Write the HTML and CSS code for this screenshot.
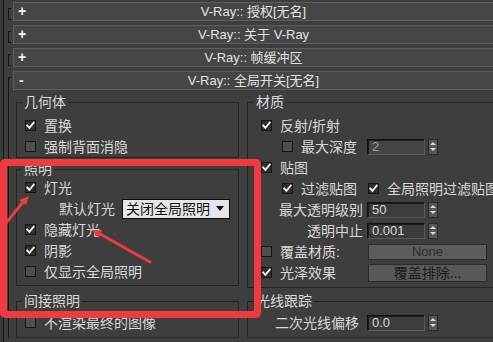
FILE: index.html
```html
<!DOCTYPE html>
<html lang="zh-CN">
<head>
<meta charset="utf-8">
<title>V-Ray 全局开关</title>
<link rel="stylesheet" href="styles.css">
</head>
<body>
<div class="app">
  <div class="rollout">
    <span class="bracket"></span>
    <div class="rmain">
      <div class="rhead"><span class="toggle">+</span><span class="rtitle">V-Ray:: 授权[无名]</span></div>
    </div>
  </div>
  <div class="rollout">
    <span class="bracket"></span>
    <div class="rmain">
      <div class="rhead"><span class="toggle">+</span><span class="rtitle">V-Ray:: 关于 V-Ray</span></div>
    </div>
  </div>
  <div class="rollout">
    <span class="bracket"></span>
    <div class="rmain">
      <div class="rhead"><span class="toggle">+</span><span class="rtitle">V-Ray:: 帧缓冲区</span></div>
    </div>
  </div>
  <div class="rollout open">
    <span class="bracket"></span>
    <div class="rmain">
      <div class="rhead"><span class="toggle minus">-</span><span class="rtitle">V-Ray:: 全局开关[无名]</span></div>
      <div class="rbody">
        <div class="col">
          <fieldset class="grp left g-geo">
            <legend>几何体</legend>
            <div class="row"><span class="cb on"><svg viewBox="0 0 9 9"><path d="M1.2 4.4 3.4 6.8 7.8 1.6"/></svg></span><span>置换</span></div>
            <div class="row"><span class="cb"></span><span>强制背面消隐</span></div>
          </fieldset>
          <fieldset class="grp left g-light">
            <legend>照明</legend>
            <div class="row"><span class="cb on"><svg viewBox="0 0 9 9"><path d="M1.2 4.4 3.4 6.8 7.8 1.6"/></svg></span><span>灯光</span></div>
            <div class="row"><span class="deflabel">默认灯光</span><span class="drop">关闭全局照明<span class="caret"></span></span></div>
            <div class="row"><span class="cb on"><svg viewBox="0 0 9 9"><path d="M1.2 4.4 3.4 6.8 7.8 1.6"/></svg></span><span>隐藏灯光</span></div>
            <div class="row"><span class="cb on"><svg viewBox="0 0 9 9"><path d="M1.2 4.4 3.4 6.8 7.8 1.6"/></svg></span><span>阴影</span></div>
            <div class="row"><span class="cb"></span><span>仅显示全局照明</span></div>
          </fieldset>
          <fieldset class="grp left g-ind">
            <legend>间接照明</legend>
            <div class="row"><span class="cb"></span><span>不渲染最终的图像</span></div>
          </fieldset>
        </div>
        <div class="col">
          <fieldset class="grp right g-mat">
            <legend>材质</legend>
            <div class="row"><span class="cb on"><svg viewBox="0 0 9 9"><path d="M1.2 4.4 3.4 6.8 7.8 1.6"/></svg></span><span>反射/折射</span></div>
            <div class="row">
              <span class="lbl sub"><span class="cb"></span><span>最大深度</span></span>
              <span class="num dis">2</span><span class="spin"><i class="up"></i><i class="dn"></i></span>
            </div>
            <div class="row"><span class="cb on"><svg viewBox="0 0 9 9"><path d="M1.2 4.4 3.4 6.8 7.8 1.6"/></svg></span><span>贴图</span></div>
            <div class="row">
              <span class="lbl sub"><span class="cb on"><svg viewBox="0 0 9 9"><path d="M1.2 4.4 3.4 6.8 7.8 1.6"/></svg></span><span>过滤贴图</span></span>
              <span class="cb on after"><svg viewBox="0 0 9 9"><path d="M1.2 4.4 3.4 6.8 7.8 1.6"/></svg></span><span>全局照明过滤贴图</span>
            </div>
            <div class="row">
              <span class="lbl end">最大透明级别</span>
              <span class="num">50</span><span class="spin"><i class="up"></i><i class="dn"></i></span>
            </div>
            <div class="row">
              <span class="lbl end">透明中止</span>
              <span class="num">0.001</span><span class="spin"><i class="up"></i><i class="dn"></i></span>
            </div>
            <div class="row">
              <span class="lbl"><span class="cb"></span><span>覆盖材质:</span></span>
              <span class="btn none">None</span>
            </div>
            <div class="row">
              <span class="lbl"><span class="cb on"><svg viewBox="0 0 9 9"><path d="M1.2 4.4 3.4 6.8 7.8 1.6"/></svg></span><span>光泽效果</span></span>
              <span class="btn excl">覆盖排除...</span>
            </div>
          </fieldset>
          <fieldset class="grp right g-ray">
            <legend>光线跟踪</legend>
            <div class="row">
              <span class="lbl pad">二次光线偏移</span>
              <span class="num">0.0</span><span class="spin"><i class="up"></i><i class="dn"></i></span>
            </div>
          </fieldset>
        </div>
      </div>
    </div>
  </div>
</div>
<svg class="marks" width="493" height="342" viewBox="0 0 493 342">
  <rect x="3.5" y="162.5" width="254" height="152" rx="1.5"/>
  <line x1="2" y1="228" x2="23" y2="202"/>
  <polygon points="29,196 26,205 19,200"/>
  <line x1="150" y1="262" x2="100" y2="234"/>
  <polygon points="92,230 102,230 98,238"/>
</svg>
</body>
</html>
```

FILE: styles.css
```css
* { box-sizing: border-box; }
html, body { margin: 0; }
body {
  width: 493px;
  height: 342px;
  overflow: hidden;
  position: relative;
  background: #3a3a3a;
  font-family: "Liberation Sans", "Noto Sans CJK SC", sans-serif;
  font-size: 14px;
  color: #d8d8d8;
}
.app {
  margin-left: 3px;
  border-left: 1px solid #161616;
  height: 342px;
  padding-top: 2px;
  background: #3e3e3e;
}
.rollout { display: flex; margin-bottom: 4px; }
.bracket {
  flex: none;
  width: 3px;
  margin: 6px 2px 1px 4px;
  border: 1px solid #141414;
  border-right: 0;
}
.rollout.open .bracket { margin-bottom: 0; border-bottom: 0; }
.rmain { flex: 1; min-width: 0; }
.rhead {
  height: 19px;
  background: #464646;
  border: 1px solid #5e5e5e;
  border-right: 0;
  display: grid;
  grid-template-columns: 20px 1fr 20px;
  align-items: center;
  font-size: 13px;
  line-height: 17px;
  color: #e2e2e2;
}
.toggle { padding-left: 4px; font-weight: bold; font-size: 14px; color: #f2f2f2; }
.toggle.minus { padding-left: 5px; }
.rtitle { text-align: center; white-space: nowrap; }

.rbody {
  display: grid;
  grid-template-columns: 223px 280px;
  column-gap: 8px;
  align-items: start;
  padding: 4px 0 0 3px;
}
.col { display: flex; flex-direction: column; }

.grp {
  margin: 0;
  min-width: 0;
  border: 1px solid #242424;
}
.grp legend {
  font-size: 14px;
  line-height: 16px;
  padding: 0 2px;
  color: #d8d8d8;
}
.grp.left { padding: 0 0 0 8px; }
.grp.left legend { margin-left: -3px; }
.grp.right { padding: 0 0 0 13px; border-right: 0; }
.grp.right legend { margin-left: -7px; }

.g-geo { padding-top: 5px !important; }
.g-light { margin-top: 3px; padding-bottom: 3px !important; }
.g-ind { margin-top: 7px; padding-top: 3px !important; padding-bottom: 4px !important; }
.g-mat { padding-top: 5px !important; padding-bottom: 4px !important; }
.g-ray { margin-top: 5px; padding-top: 3px !important; padding-bottom: 4px !important; }

.row {
  display: flex;
  align-items: center;
  height: 21px;
  white-space: nowrap;
  line-height: 20px;
}
.cb {
  flex: none;
  width: 11px;
  height: 11px;
  margin-right: 8px;
  border: 1px solid #151515;
  background: #4e4e4e;
  display: flex;
}
.cb.on { background: #2f2f2f; }
.cb svg { width: 9px; height: 9px; }
.cb svg path { fill: none; stroke: #f4f4f4; stroke-width: 1.8; stroke-linecap: square; }
.cb.after { margin-left: 5px; }

.deflabel { padding-left: 34px; }
.drop {
  margin-left: 7px;
  width: 108px;
  height: 20px;
  background: #e6e6e6;
  border: 1px solid #0e0e0e;
  color: #111;
  line-height: 18px;
  padding-left: 3px;
  display: flex;
  align-items: center;
}
.caret {
  margin-left: auto;
  margin-right: 5px;
  width: 0;
  height: 0;
  border-left: 4px solid transparent;
  border-right: 4px solid transparent;
  border-top: 5px solid #111;
}

.lbl { flex: none; width: 102px; display: flex; align-items: center; }
.lbl.sub { padding-left: 21px; }
.lbl.end { justify-content: flex-end; }
.lbl.pad { padding-left: 14px; }

.num {
  flex: none;
  margin-left: 4px;
  width: 58px;
  height: 16px;
  background: #3c3c3c;
  border: 1px solid #121212;
  border-right-color: #5a5a5a;
  border-bottom-color: #5a5a5a;
  box-shadow: inset 1px 1px 0 #1c1c1c;
  font-size: 13px;
  line-height: 14px;
  padding-left: 4px;
  color: #d6d6d6;
}
.num.dis { background: #454545; color: #9c9c9c; }
.spin {
  flex: none;
  margin-left: 3px;
  width: 10px;
  height: 16px;
  background: #575757;
  border: 1px solid #2a2a2a;
  display: flex;
  flex-direction: column;
  align-items: center;
  justify-content: center;
  gap: 3px;
}
.spin i { display: block; width: 0; height: 0; border-left: 3px solid transparent; border-right: 3px solid transparent; }
.spin .up { border-bottom: 3px solid #d8d8d8; }
.spin .dn { border-top: 3px solid #d8d8d8; }

.btn {
  flex: none;
  margin-left: 5px;
  width: 119px;
  background: #585858;
  border: 1px solid #2c2c2c;
  text-align: center;
  color: #1a1a1a;
}
.btn.none { height: 16px; line-height: 14px; font-size: 13px; color: #2e2e2e; background: #5c5c5c; }
.btn.excl { height: 18px; line-height: 16px; font-size: 14px; }

.marks {
  position: absolute;
  left: 0;
  top: 0;
  pointer-events: none;
}
.marks rect { fill: none; stroke: #f03a3f; stroke-width: 7; }
.marks line { stroke: #ef3b3f; stroke-width: 3; stroke-linecap: round; }
.marks polygon { fill: #ef3b3f; }
```
